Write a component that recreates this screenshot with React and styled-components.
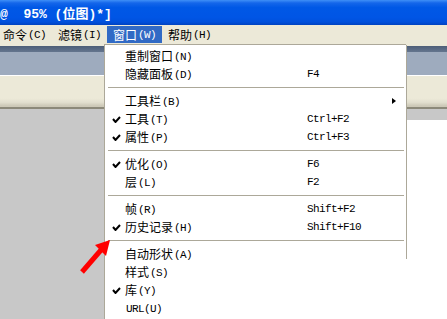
import React from 'react';
import styled, { createGlobalStyle } from 'styled-components';

const GlobalStyle = createGlobalStyle`
  html, body {
    margin: 0;
    padding: 0;
    background: #fff;
  }
`;

const CJK = '"Noto Sans CJK SC", "Noto Sans", sans-serif';
const MONO = '"Liberation Mono", "DejaVu Sans Mono", monospace';

const Screen = styled.div`
  position: relative;
  width: 447px;
  height: 319px;
  overflow: hidden;
  display: flex;
  flex-direction: column;
  font-family: ${CJK};
  font-size: 12px;
  color: #000;
`;

// Синяя полоса заголовка в стиле XP
const TitleBar = styled.div`
  height: 25px;
  flex-shrink: 0;
  display: flex;
  align-items: center;
  background: linear-gradient(
    to bottom,
    #3f8ff7 0%,
    #1466ea 12%,
    #0058e6 30%,
    #0055e5 70%,
    #0050dc 88%,
    #0042c0 100%
  );
  color: #fff;
  font-family: ${MONO}, ${CJK};
  font-weight: bold;
  font-size: 13px;
  white-space: pre;
`;

const MenuBar = styled.div`
  height: 21px;
  flex-shrink: 0;
  display: flex;
  align-items: stretch;
  background: #ece9d8;
  margin-left: -3px;
`;

const MenuTitle = styled.div`
  display: flex;
  align-items: center;
  padding: 0 6px;
  margin: 1px 0 3px;
  line-height: 18px;
  background: ${({ active }) => (active ? '#316ac5' : 'transparent')};
  color: ${({ active }) => (active ? '#fff' : '#000')};
`;

// Буквы-ускорители вроде (N) — моноширинные, как в SimSun
const Key = styled.span`
  font-family: ${MONO};
  font-size: 11px;
  line-height: 12px;
  letter-spacing: -0.6px;
  margin-left: 1px;
  padding-top: 1px;
`;

const TopStrip = styled.div`
  height: 6px;
  flex-shrink: 0;
  background: linear-gradient(to bottom, #4d5e78, #64758e);
`;

const PanelBar = styled.div`
  height: 23px;
  flex-shrink: 0;
  background: #9eabbe;
  border-bottom: 1px solid #fff;
`;

const ToolBar = styled.div`
  height: 31px;
  flex-shrink: 0;
  background: linear-gradient(
    to bottom,
    #ece9d8 0%,
    #ece9d8 72%,
    #e2dfcf 85%,
    #cdc9b8 96%
  );
  border-bottom: 2px solid #8c897a;
`;

const Work = styled.div`
  flex: 1;
  display: flex;
`;

const Canvas = styled.div`
  flex: 1;
  background: #c8c8c8;
`;

const SidePanel = styled.div`
  width: 150px;
  display: flex;
  flex-direction: column;
`;

const SideStrip = styled.div`
  height: 11px;
  background: #c8c8c8;
`;

const SideBody = styled.div`
  flex: 1;
  background: #fff;
`;

// Выпадающее меню «窗口»
const Dropdown = styled.div`
  position: absolute;
  left: 104px;
  top: 44px;
  width: 301px;
  height: 290px;
  background: #fff;
  border-left: 1px solid #aca899;
  border-top: 1px solid #aca899;
  padding-top: 2px;

  &::after {
    content: '';
    position: absolute;
    right: -1px;
    top: 0;
    width: 1px;
    height: 214px;
    background: #aca899;
  }
`;

const Item = styled.div`
  display: grid;
  grid-template-columns: 20px 182px 1fr;
  align-items: center;
  height: 18px;
  line-height: 18px;
`;

const CheckCell = styled.div`
  display: flex;
  justify-content: flex-end;
  padding-right: 4px;
`;

const Label = styled.div`
  display: flex;
  align-items: center;
  white-space: nowrap;
`;

const Shortcut = styled.div`
  font-family: ${MONO};
  font-size: 11px;
  letter-spacing: -0.6px;
  display: flex;
  align-items: center;
  justify-content: space-between;
  padding-right: 10px;
`;

const Separator = styled.div`
  height: 9px;
  display: flex;
  align-items: center;
  padding: 0 2px 0 3px;

  &::before {
    content: '';
    flex: 1;
    height: 1px;
    background: #aca899;
  }
`;

const SubArrow = styled.span`
  margin-left: auto;
  width: 0;
  height: 0;
  border-top: 3.5px solid transparent;
  border-bottom: 3.5px solid transparent;
  border-left: 4px solid #000;
`;

const Pointer = styled.svg`
  position: absolute;
  left: 76px;
  top: 236px;
`;

const Check = () => (
  <svg width="9" height="7" viewBox="0 0 9 7">
    <path d="M1 3 L3.5 6 L8 1" stroke="#000" strokeWidth="2" fill="none" />
  </svg>
);

const menus = [
  { text: '命令', key: '(C)' },
  { text: '滤镜', key: '(I)' },
  { text: '窗口', key: '(W)', active: true },
  { text: '帮助', key: '(H)' },
];

const items = [
  { text: '重制窗口', key: '(N)' },
  { text: '隐藏面板', key: '(D)', sc: 'F4' },
  'sep',
  { text: '工具栏', key: '(B)', sub: true },
  { text: '工具', key: '(T)', sc: 'Ctrl+F2', checked: true },
  { text: '属性', key: '(P)', sc: 'Ctrl+F3', checked: true },
  'sep',
  { text: '优化', key: '(O)', sc: 'F6', checked: true },
  { text: '层', key: '(L)', sc: 'F2' },
  'sep',
  { text: '帧', key: '(R)', sc: 'Shift+F2' },
  { text: '历史记录', key: '(H)', sc: 'Shift+F10', checked: true },
  'sep',
  { text: '自动形状', key: '(A)' },
  { text: '样式', key: '(S)' },
  { text: '库', key: '(Y)', checked: true },
  { text: '', key: 'URL(U)' },
];

export default function App() {
  return (
    <>
      <GlobalStyle />
      <Screen>
        <TitleBar>{'@  95% (位图)*]'}</TitleBar>
        <MenuBar>
          {menus.map((m) => (
            <MenuTitle key={m.text} active={m.active}>
              {m.text}
              <Key>{m.key}</Key>
            </MenuTitle>
          ))}
        </MenuBar>
        <TopStrip />
        <PanelBar />
        <ToolBar />
        <Work>
          <Canvas />
          <SidePanel>
            <SideStrip />
            <SideBody />
          </SidePanel>
        </Work>

        <Dropdown>
          {items.map((it, i) =>
            it === 'sep' ? (
              <Separator key={i} />
            ) : (
              <Item key={i}>
                <CheckCell>{it.checked && <Check />}</CheckCell>
                <Label>
                  {it.text}
                  <Key>{it.key}</Key>
                </Label>
                <Shortcut>
                  {it.sc}
                  {it.sub && <SubArrow />}
                </Shortcut>
              </Item>
            )
          )}
        </Dropdown>

        <Pointer width="40" height="42" viewBox="0 0 40 42">
          <line x1="6" y1="36" x2="25" y2="14" stroke="#ff0000" strokeWidth="5" />
          <polygon points="34,4 19,9 30,20" fill="#ff0000" />
        </Pointer>
      </Screen>
    </>
  );
}
